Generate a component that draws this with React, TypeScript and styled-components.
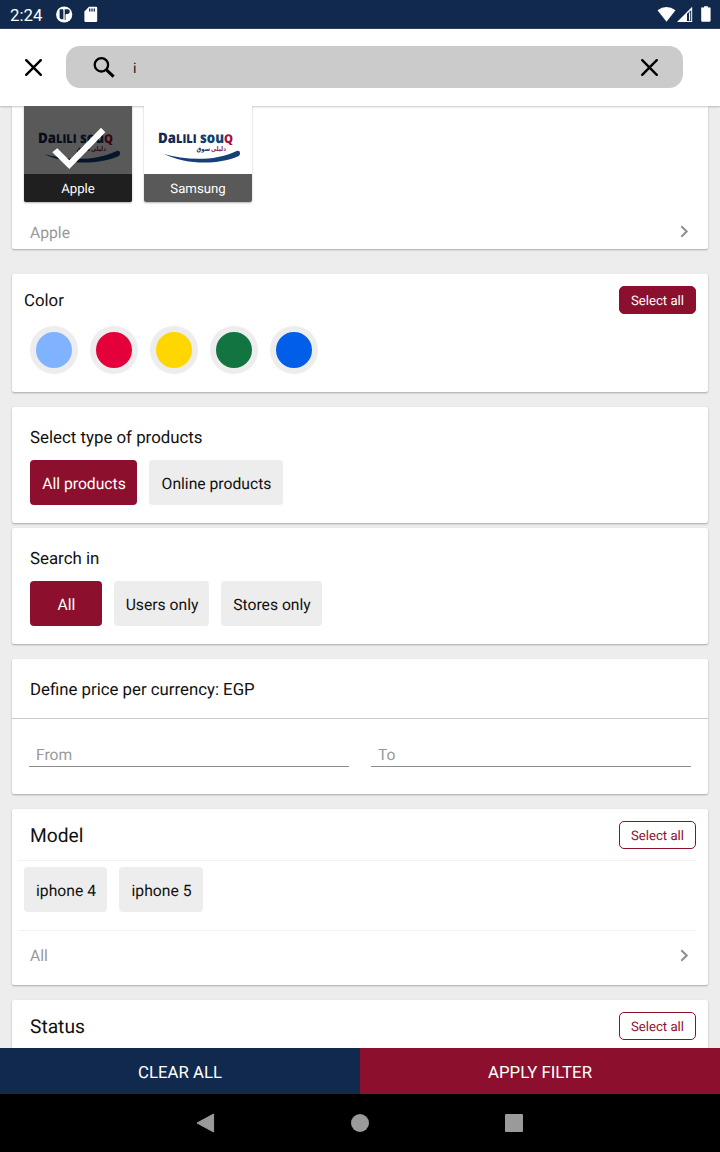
import React from "react";
import styled, { createGlobalStyle } from "styled-components";

const NAVY = "#10294d";
const CRIMSON = "#8c102d";

const GlobalStyle = createGlobalStyle`
  * { box-sizing: border-box; }
  html, body { margin: 0; padding: 0; }
  body {
    font-family: Roboto, "Liberation Sans", sans-serif;
    font-size: 16.8px;
    color: #111;
    background: #ededed;
    text-rendering: geometricPrecision;
  }
  button, input { font: inherit; color: inherit; border: 0; background: none; padding: 0; margin: 0; text-rendering: inherit; }
`;

const Screen = styled.div`
  width: 720px;
  height: 1152px;
  display: flex;
  flex-direction: column;
  overflow: hidden;
`;

const StatusBar = styled.div`
  flex: none;
  height: 29px;
  padding: 0 8px 0 10px;
  display: flex;
  align-items: center;
  justify-content: space-between;
  background: ${NAVY};
  border-bottom: 1px solid #2c4261;
  color: #fff;
`;

const StatusSide = styled.div`
  display: flex;
  align-items: center;
  svg { display: block; }
`;

const Clock = styled.span`
  font-size: 16.8px;
  line-height: 28px;
  width: 46px;
  padding-top: 3px;
`;

const Header = styled.header`
  flex: none;
  position: relative;
  height: 77px;
  padding: 0 37px 1px 21px;
  display: flex;
  align-items: center;
  gap: 20px;
  background: #fff;
  box-shadow: 0 1px 2px rgba(0, 0, 0, 0.22);
`;

const IconButton = styled.button`
  display: flex;
  width: 25px;
  height: 25px;
  align-items: center;
  justify-content: center;
`;

const SearchField = styled.div`
  flex: 1;
  height: 42px;
  display: flex;
  align-items: center;
  border-radius: 14px;
  background: #cbcbcb;
  padding: 0 21px 0 26px;
`;

const Query = styled.div`
  flex: 1;
  padding: 2px 0 0 16px;
  font-size: 14.4px;
  color: #222;
`;

const Content = styled.main`
  flex: none;
  height: 942px;
  padding: 0 12px;
  overflow: hidden;
  background: #ededed;
`;

const Card = styled.section<{ $h: number; $gap: number; $flatTop?: boolean }>`
  height: ${(p) => p.$h}px;
  margin-bottom: ${(p) => p.$gap}px;
  background: #fff;
  border-radius: ${(p) => (p.$flatTop ? "0 0 2px 2px" : "2px")};
  box-shadow: 0 1px 2px rgba(0, 0, 0, 0.3);
  display: flex;
  flex-direction: column;
`;

const Tiles = styled.div`
  display: flex;
  gap: 12px;
  padding: 0 12px 6px;
`;

const Tile = styled.div`
  position: relative;
  width: 108px;
  height: 96px;
  display: flex;
  flex-direction: column;
  justify-content: flex-end;
  border-radius: 0 0 2px 2px;
  overflow: hidden;
  box-shadow: 0 1px 2px rgba(0, 0, 0, 0.3);
  svg { display: block; flex: none; }
`;

const TileLabel = styled.div`
  height: 28px;
  line-height: 31px;
  text-align: center;
  font-size: 13.2px;
  color: #fff;
  background: #595959;
`;

const Selected = styled.div`
  position: absolute;
  inset: 0;
  background: rgba(0, 0, 0, 0.65);
`;

const SelectedLabel = styled(TileLabel)`
  position: relative;
  background: #1f1f1f;
`;

const SummaryRow = styled.div<{ $h: number }>`
  flex: none;
  height: ${(p) => p.$h}px;
  padding: 0 17px 0 18px;
  display: flex;
  align-items: center;
  justify-content: space-between;
  font-size: 15.7px;
  color: #999;
  svg { display: block; }
`;

const TitleRow = styled.div<{ $h: number; $left: number; $large?: boolean }>`
  height: ${(p) => p.$h}px;
  padding: 0 12px 0 ${(p) => p.$left}px;
  display: flex;
  align-items: center;
  justify-content: space-between;
  font-size: ${(p) => (p.$large ? 19.2 : 16.8)}px;
  span { padding-top: 2px; }
`;

const SelectAll = styled.button<{ $filled?: boolean }>`
  width: 77px;
  height: 28px;
  padding-top: 3px;
  border-radius: 5px;
  border: 1px solid ${CRIMSON};
  font-size: 13.2px;
  background: ${(p) => (p.$filled ? CRIMSON : "#fff")};
  color: ${(p) => (p.$filled ? "#fff" : CRIMSON)};
`;

const Swatches = styled.div`
  display: flex;
  gap: 12px;
  padding: 0 18px;
`;

const Swatch = styled.div<{ $color: string }>`
  width: 48px;
  height: 48px;
  border-radius: 50%;
  border: 6px solid #ededed;
  background: ${(p) => p.$color};
`;

const Heading = styled.h2`
  margin: 0;
  padding: 20px 18px 0;
  height: 53px;
  font-size: 16.85px;
  font-weight: 400;
  line-height: 22px;
`;

const Chips = styled.div<{ $left: number; $top?: number; $bottom?: number }>`
  display: flex;
  gap: 12px;
  padding: ${(p) => p.$top ?? 0}px 0 ${(p) => p.$bottom ?? 0}px ${(p) => p.$left}px;
`;

const Chip = styled.button<{ $w: number; $active?: boolean }>`
  width: ${(p) => p.$w}px;
  height: 45px;
  padding: 1px 0 0 1px;
  border-radius: 4px;
  font-size: 15.7px;
  white-space: nowrap;
  background: ${(p) => (p.$active ? CRIMSON : "#ededed")};
  color: ${(p) => (p.$active ? "#fff" : "#111")};
`;

const PriceTitle = styled.div`
  height: 60px;
  padding: 0 18px;
  line-height: 63px;
  border-bottom: 1px solid #cbcbcb;
`;

const PriceFields = styled.div`
  display: flex;
  gap: 22px;
  padding: 20px 17px 0;
`;

const PriceInput = styled.input`
  flex: 1;
  min-width: 0;
  height: 28px;
  padding: 4px 7px 0;
  font-size: 15.6px;
  border-bottom: 1px solid #8c8c8c;
  &::placeholder { color: #999; opacity: 1; }
`;

const Rule = styled.div`
  height: 1px;
  margin: 0 12px 0 6px;
  background: #f2f2f2;
`;

const Actions = styled.div`
  flex: none;
  height: 46px;
  display: flex;
`;

const Action = styled.button<{ $bg: string }>`
  flex: 1;
  padding-top: 4px;
  background: ${(p) => p.$bg};
  color: #fff;
`;

const NavBar = styled.nav`
  flex: 1;
  display: flex;
  align-items: center;
  justify-content: center;
  gap: 134px;
  background: #000;
  svg { display: block; }
`;

const Cross = () => (
  <svg width="25" height="25" viewBox="0 0 25 25">
    <path d="M5.200 5.200 19.800 19.800M19.800 5.200 5.200 19.800" stroke="#000" strokeWidth="2.400" strokeLinecap="round" />
  </svg>
);

const Magnifier = () => (
  <svg width="25" height="24" viewBox="0 -0.7 25 24">
    <circle cx="9.400" cy="9.100" r="6.700" fill="none" stroke="#000" strokeWidth="2.300" />
    <path d="M14.200 13.900 21.600 21" stroke="#000" strokeWidth="3" />
  </svg>
);

const Chevron = () => (
  <svg width="12" height="14" viewBox="0 0.5 12 14">
    <path d="M2.300 1.800 7.700 7 2.300 12.200" fill="none" stroke="#8e8e8e" strokeWidth="2" />
  </svg>
);

const latin = {
  fontFamily: '"Open Sans", "Noto Sans", sans-serif',
  fontWeight: 800,
  lengthAdjust: "spacingAndGlyphs" as const,
};

const arabic = {
  fontFamily: '"DejaVu Sans", sans-serif',
  fontWeight: 700,
  fontSize: 6.6,
  lengthAdjust: "spacingAndGlyphs" as const,
};

const BrandLogo = () => (
  <svg width="108" height="68" viewBox="0 0 108 68">
    <rect width="108" height="68" fill="#fff" />
    <text {...latin} x="14" y="37.400" fontSize="14.500" textLength="9.800" fill="#16284f">D</text>
    <text {...latin} x="23.800" y="37.400" fontSize="15" textLength="8.200" fill="#16284f">a</text>
    <text {...latin} x="32" y="37.400" fontSize="12.200" textLength="20.600" fill="#16284f">LILI</text>
    <text {...latin} x="56" y="37.400" fontSize="15.200" textLength="24" fill="#14406f">sou</text>
    <text {...latin} x="80" y="37.400" fontSize="12.200" textLength="9" fill="#a5123b">Q</text>
    <text {...arabic} x="52.500" y="44.600" textLength="13.500" fill="#1c3768">سوق</text>
    <text {...arabic} x="67" y="44.600" textLength="15" fill="#8e1a4b">دليلي</text>
    <path d="M20 48C42 54.500 72 55 91.500 45.400c2.300-1.200 4.500-.6 4.500 1.800 0 1.600-.6 2.400-2.300 3.300C72 59.500 42 58.500 20 48Z" fill="#183f7a" />
  </svg>
);

const Check = () => (
  <svg width="108" height="96" viewBox="0 0 108 96">
    <path d="M28.300 46.300 33.300 42.300 45.300 54.300 77 21.700 81.300 26.300 45.300 63Z" fill="#fff" />
  </svg>
);

const colors = ["#80b3ff", "#e4003a", "#ffd600", "#127440", "#005ee8"];

export default function App() {
  return (
    <Screen>
      <GlobalStyle />
      <StatusBar>
        <StatusSide>
          <Clock>2:24</Clock>
          <svg width="45" height="18" viewBox="0 0 45 18">
            <circle cx="8.200" cy="9.500" r="8.100" fill="#fff" />
            <path d="M3.600 5.200Q3.600 4.300 4.500 4.300H6.700Q7.400 4.300 7.400 5V13.800Q7.400 14.300 6.800 14.300H5.200Q3.600 13.600 3.600 12.500Z" fill={NAVY} />
            <path d="M8.700 4.300H11.500A2.200 2.200 0 0 1 11.500 8.900H10.200Q9.500 8.900 9.500 9.800V15H8.700Z" fill={NAVY} />
            <path d="M33 1.800H40a1.200 1.200 0 0 1 1.200 1.200V15.700A1.200 1.200 0 0 1 40 16.900H29.600a1.200 1.200 0 0 1-1.200-1.200V6.500Z" fill="#fff" />
            <path d="M33.700 3.500V6.500M36 3.500V6.500M38.300 3.500V6.500" stroke={NAVY} strokeWidth="1.300" />
          </svg>
        </StatusSide>
        <StatusSide>
          <svg width="56" height="18" viewBox="0 0 56 18">
            <path d="M1.500 5.300Q10.500-1.300 19.500 5.300L10.500 16.700Z" fill="#fff" />
            <path d="M21 16.900 36.200 1.700V16.900Z" fill="#fff" />
            <path d="M31 8.700 35.200 5.200V15.900H31Z" fill={NAVY} />
            <path d="M33.600 7.500V15.500" stroke="#fff" strokeWidth="1.200" />
            <path d="M46.800 2.400H48V1.200H52V2.400H53.200A1.200 1.200 0 0 1 54.600 3.600V15.600A1.200 1.200 0 0 1 53.400 16.800H46.400A1.200 1.200 0 0 1 45.200 15.600V3.600A1.200 1.200 0 0 1 46.800 2.400Z" fill="#fff" />
          </svg>
        </StatusSide>
      </StatusBar>

      <Header>
        <IconButton aria-label="Close"><Cross /></IconButton>
        <SearchField>
          <Magnifier />
          <Query>i</Query>
          <IconButton aria-label="Clear"><Cross /></IconButton>
        </SearchField>
      </Header>

      <Content>
        <Card $h={143} $gap={25} $flatTop>
          <Tiles>
            <Tile>
              <BrandLogo />
              <Selected><Check /></Selected>
              <SelectedLabel>Apple</SelectedLabel>
            </Tile>
            <Tile>
              <BrandLogo />
              <TileLabel>Samsung</TileLabel>
            </Tile>
          </Tiles>
          <SummaryRow $h={48}><span>Apple</span><Chevron /></SummaryRow>
        </Card>

        <Card $h={118} $gap={15}>
          <TitleRow $h={52} $left={12}>
            <span>Color</span>
            <SelectAll $filled>Select all</SelectAll>
          </TitleRow>
          <Swatches>
            {colors.map((c) => <Swatch key={c} $color={c} />)}
          </Swatches>
        </Card>

        <Card $h={116} $gap={5}>
          <Heading>Select type of products</Heading>
          <Chips $left={18}>
            <Chip $w={107} $active>All products</Chip>
            <Chip $w={134}>Online products</Chip>
          </Chips>
        </Card>

        <Card $h={116} $gap={15}>
          <Heading>Search in</Heading>
          <Chips $left={18}>
            <Chip $w={72} $active>All</Chip>
            <Chip $w={95}>Users only</Chip>
            <Chip $w={101}>Stores only</Chip>
          </Chips>
        </Card>

        <Card $h={135} $gap={15}>
          <PriceTitle>Define price per currency: EGP</PriceTitle>
          <PriceFields>
            <PriceInput placeholder="From" />
            <PriceInput placeholder="To" />
          </PriceFields>
        </Card>

        <Card $h={176} $gap={15}>
          <TitleRow $h={51} $left={18} $large>
            <span>Model</span>
            <SelectAll>Select all</SelectAll>
          </TitleRow>
          <Rule />
          <Chips $left={12} $top={6} $bottom={18}>
            <Chip $w={83}>iphone 4</Chip>
            <Chip $w={84}>iphone 5</Chip>
          </Chips>
          <Rule />
          <SummaryRow $h={49}><span>All</span><Chevron /></SummaryRow>
        </Card>

        <Card $h={120} $gap={0}>
          <TitleRow $h={51} $left={18} $large>
            <span>Status</span>
            <SelectAll>Select all</SelectAll>
          </TitleRow>
        </Card>
      </Content>

      <Actions>
        <Action $bg={NAVY}>CLEAR ALL</Action>
        <Action $bg={CRIMSON}>APPLY FILTER</Action>
      </Actions>

      <NavBar>
        <svg width="20" height="20" viewBox="0 0 20 20">
          <path d="M17.600 1V19L1 10Z" fill="#9a9a9a" stroke="#9a9a9a" strokeLinejoin="round" />
        </svg>
        <svg width="20" height="20" viewBox="0 0 20 20"><circle cx="10" cy="10" r="9" fill="#9a9a9a" /></svg>
        <svg width="20" height="20" viewBox="0 0 20 20"><rect x="1" y="1" width="18" height="18" rx="1" fill="#9a9a9a" /></svg>
      </NavBar>
    </Screen>
  );
}
